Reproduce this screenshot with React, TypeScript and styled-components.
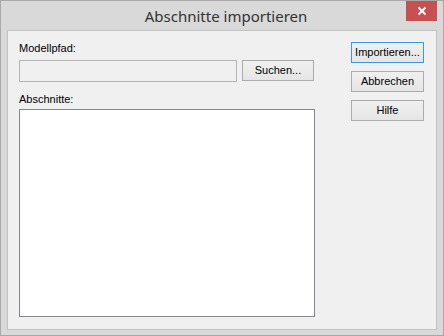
import React from "react";
import styled, { createGlobalStyle } from "styled-components";

const GlobalStyle = createGlobalStyle`
  html, body {
    margin: 0;
    padding: 0;
    background: #ffffff;
  }
`;

const Window = styled.div`
  width: 444px;
  height: 336px;
  box-sizing: border-box;
  border: 1px solid #a9a9a9;
  background: #d9d9d9;
  padding: 0 6px 5px 6px;
  display: flex;
  flex-direction: column;
`;

const TitleBar = styled.div`
  height: 29px;
  margin: 0 -6px;
  display: grid;
  grid-template-columns: 1fr auto 1fr;
  align-items: start;
`;

const Title = styled.div`
  grid-column: 2;
  padding-left: 8px;
  padding-top: 5px;
  font-family: "Segoe UI", "Noto Sans", sans-serif;
  font-size: 15px;
  line-height: 20px;
  color: #333333;
`;

const CloseButton = styled.div`
  grid-column: 3;
  justify-self: end;
  margin-right: 6px;
  width: 31px;
  height: 20px;
  background: #c75050;
  color: #ffffff;
  display: flex;
  align-items: center;
  justify-content: center;
`;

const Client = styled.div`
  flex: 1;
  border: 1px solid #c2c2c2;
  background: #f0f0f0;
  padding: 11px;
  display: flex;
  gap: 36px;
  font-family: "Tahoma", "Liberation Sans", sans-serif;
  font-size: 11px;
  color: #000000;
`;

const LeftColumn = styled.div`
  width: 296px;
  display: flex;
  flex-direction: column;
`;

const Label = styled.div<{ $gap: number }>`
  line-height: 13px;
  margin-bottom: ${(p) => p.$gap}px;
`;

const PathRow = styled.div`
  display: flex;
  align-items: flex-start;
  gap: 5px;
  margin-bottom: 11px;
`;

const PathField = styled.div`
  width: 218px;
  height: 22px;
  box-sizing: border-box;
  border: 1px solid #b5b5b5;
  background: #f0f0f0;
`;

const Button = styled.div<{ $default?: boolean }>`
  width: ${(p) => (p.$default ? 73 : 73)}px;
  height: 21px;
  box-sizing: border-box;
  border: 1px solid ${(p) => (p.$default ? "#3d97e8" : "#acacac")};
  background: linear-gradient(#f0f0f0, #e5e5e5);
  display: flex;
  align-items: center;
  justify-content: center;
  line-height: 13px;
  white-space: nowrap;
  color: #000000;
`;

const SearchButton = styled(Button)`
  width: 72px;
`;

const SectionList = styled.div`
  height: 208px;
  box-sizing: border-box;
  border: 1px solid #828790;
  background: #ffffff;
`;

const RightColumn = styled.div`
  display: flex;
  flex-direction: column;
  gap: 8px;
`;

export default function App() {
  return (
    <>
      <GlobalStyle />
      <Window>
        <TitleBar>
          <Title>Abschnitte importieren</Title>
          <CloseButton>
            <svg width="10" height="10" viewBox="0 0 10 10">
              <path d="M1.5 1.5 L8.5 8.5 M8.5 1.5 L1.5 8.5" stroke="#ffffff" strokeWidth="2" />
            </svg>
          </CloseButton>
        </TitleBar>
        <Client>
          <LeftColumn>
            <Label $gap={5}>Modellpfad:</Label>
            <PathRow>
              <PathField />
              <SearchButton>Suchen...</SearchButton>
            </PathRow>
            <Label $gap={3}>Abschnitte:</Label>
            <SectionList />
          </LeftColumn>
          <RightColumn>
            <Button $default>Importieren...</Button>
            <Button>Abbrechen</Button>
            <Button>Hilfe</Button>
          </RightColumn>
        </Client>
      </Window>
    </>
  );
}
